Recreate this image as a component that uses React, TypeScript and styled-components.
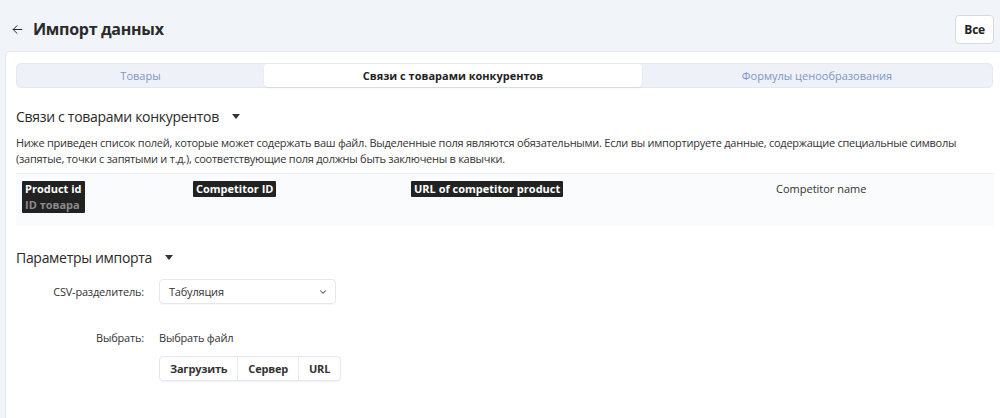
import React from "react";
import styled, { createGlobalStyle } from "styled-components";

const Global = createGlobalStyle`
  html, body { margin: 0; padding: 0; background: #f1f4f9; }
  body { font-family: "Open Sans", "Noto Sans", Arial, sans-serif; color: #222; }
  * { box-sizing: border-box; }
`;

const Page = styled.div`
  width: 1000px;
  height: 418px;
  overflow: hidden;
  background: #f1f4f9;
`;

const Header = styled.div`
  height: 51px;
  display: flex;
  align-items: center;
  padding: 7px 6px 0 11px;
  gap: 9px;
`;

const BackBtn = styled.span`
  display: flex;
  align-items: center;
  color: #222;
`;

const Title = styled.h1`
  margin: 0;
  font-size: 16px;
  font-weight: 700;
  color: #2a2a2a;
  flex: 1;
  letter-spacing: -0.3px;
`;

const AllBtn = styled.button`
  font-family: inherit;
  height: 29px;
  padding: 0 8px;
  background: #fff;
  border: 1px solid #d6d9de;
  border-radius: 4px;
  font-size: 12px;
  font-weight: 700;
  color: #222;
  letter-spacing: -0.2px;
`;

const Card = styled.div`
  margin-left: 5px;
  background: #fff;
  border-top: 1px solid #e3e7ee;
  border-left: 1px solid #e3e7ee;
  border-top-left-radius: 5px;
  height: 367px;
  padding: 11px 7px 0 10px;
`;

const Tabs = styled.div`
  display: grid;
  grid-template-columns: 247px 378px 1fr;
  height: 25px;
  background: #eef2f8;
  border: 1px solid #e4e9f1;
  border-radius: 5px;
`;

const Tab = styled.div<{ $active?: boolean }>`
  display: flex;
  align-items: center;
  justify-content: center;
  font-size: 11px;
  border-radius: 4px;
  background: ${(p) => (p.$active ? "#fff" : "transparent")};
  color: ${(p) => (p.$active ? "#222" : "#7d97c4")};
  font-weight: ${(p) => (p.$active ? 700 : 400)};
  box-shadow: ${(p) => (p.$active ? "0 1px 2px rgba(0,0,0,0.08)" : "none")};
`;

const SectionTitle = styled.div<{ $top: number }>`
  display: flex;
  align-items: center;
  gap: 13px;
  margin-top: ${(p) => p.$top}px;
  font-size: 14px;
  font-weight: 500;
  color: #2a2a2a;
  letter-spacing: -0.3px;
`;

const Caret = styled.span`
  width: 0;
  height: 0;
  border-left: 4px solid transparent;
  border-right: 4px solid transparent;
  border-top: 5px solid #333;
  margin-top: -1px;
`;

const Paragraph = styled.p`
  margin: 9px 0 0;
  font-size: 11px;
  line-height: 15.5px;
  color: #333;
  width: 980px;
  letter-spacing: -0.25px;
`;

const Table = styled.div`
  margin-top: 7px;
  border-top: 1px solid #eceff3;
  background: #fafbfd;
  height: 53px;
  display: grid;
  grid-template-columns: 171px 218px 365px 1fr;
  padding: 7px 0 0 6px;
  width: 978px;
`;

const Cell = styled.div`
  font-size: 11px;
  line-height: 16px;
`;

const Badge = styled.span`
  display: inline-block;
  background: #222;
  color: #fff;
  font-weight: 700;
  padding: 0 3px;
  border-radius: 1px;
`;

const Sub = styled.span`
  display: block;
  color: #8b8b8b;
`;

const Plain = styled.span`
  color: #333;
`;

const FormRow = styled.div<{ $top: number }>`
  display: grid;
  grid-template-columns: 128px 1fr;
  column-gap: 15px;
  align-items: center;
  margin-top: ${(p) => p.$top}px;
  font-size: 11px;
  color: #333;
  letter-spacing: -0.2px;
`;

const Label = styled.div`
  text-align: right;
`;

const Select = styled.div`
  width: 177px;
  height: 25px;
  border: 1px solid #e4e7ec;
  border-radius: 4px;
  display: flex;
  align-items: center;
  justify-content: space-between;
  padding: 0 7px 0 9px;
  font-size: 11px;
  color: #333;
  box-shadow: 0 1px 1px rgba(0,0,0,0.03);
`;

const BtnGroup = styled.div`
  display: inline-flex;
  border: 1px solid #e4e7ec;
  border-radius: 4px;
  box-shadow: 0 1px 2px rgba(0,0,0,0.06);
  height: 25px;
  margin-top: 11px;
`;

const GroupBtn = styled.div<{ $last?: boolean }>`
  display: flex;
  align-items: center;
  padding: 0 10px;
  font-size: 11px;
  font-weight: 700;
  color: #333;
  border-right: ${(p) => (p.$last ? "none" : "1px solid #e8eaee")};
`;

export default function App() {
  return (
    <Page>
      <Global />
      <Header>
        <BackBtn>
          <svg width="13" height="13" viewBox="0 0 24 24" fill="none" stroke="#222" strokeWidth="1.8" strokeLinecap="round" strokeLinejoin="round">
            <path d="M20 12H4" />
            <path d="M11 19l-7-7 7-7" />
          </svg>
        </BackBtn>
        <Title>Импорт данных</Title>
        <AllBtn>Все</AllBtn>
      </Header>
      <Card>
        <Tabs>
          <Tab>Товары</Tab>
          <Tab $active>Связи с товарами конкурентов</Tab>
          <Tab>Формулы ценообразования</Tab>
        </Tabs>
        <SectionTitle $top={19}>
          Связи с товарами конкурентов <Caret />
        </SectionTitle>
        <Paragraph>
          Ниже приведен список полей, которые может содержать ваш файл. Выделенные поля являются обязательными. Если вы импортируете данные, содержащие специальные символы (запятые, точки с запятыми и т.д.), соответствующие поля должны быть заключены в кавычки.
        </Paragraph>
        <Table>
          <Cell>
            <Badge>
              Product id
              <Sub>ID товара</Sub>
            </Badge>
          </Cell>
          <Cell>
            <Badge>Competitor ID</Badge>
          </Cell>
          <Cell>
            <Badge>URL of competitor product</Badge>
          </Cell>
          <Cell>
            <Plain>Competitor name</Plain>
          </Cell>
        </Table>
        <SectionTitle $top={22}>
          Параметры импорта <Caret />
        </SectionTitle>
        <FormRow $top={12}>
          <Label>CSV-разделитель:</Label>
          <Select>
            Табуляция
            <svg width="10" height="10" viewBox="0 0 24 24" fill="none" stroke="#555" strokeWidth="2.5" strokeLinecap="round" strokeLinejoin="round">
              <path d="M6 9l6 6 6-6" />
            </svg>
          </Select>
        </FormRow>
        <FormRow $top={26}>
          <Label>Выбрать:</Label>
          <div>Выбрать файл</div>
        </FormRow>
        <FormRow $top={0}>
          <div />
          <div>
            <BtnGroup>
              <GroupBtn>Загрузить</GroupBtn>
              <GroupBtn>Сервер</GroupBtn>
              <GroupBtn $last>URL</GroupBtn>
            </BtnGroup>
          </div>
        </FormRow>
      </Card>
    </Page>
  );
}
